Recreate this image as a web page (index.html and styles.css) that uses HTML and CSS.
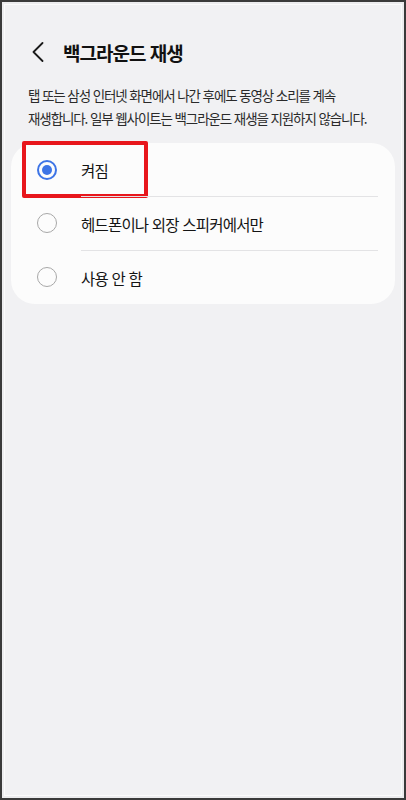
FILE: index.html
```html
<!DOCTYPE html>
<html lang="ko">
  <head>
    <meta charset="UTF-8" />
    <meta name="viewport" content="width=device-width, initial-scale=1.0" />
    <title>백그라운드 재생</title>
    <link rel="stylesheet" href="styles.css">
  </head>
  <body>
    <div class="phone">
      <div class="screen">
        <div class="header">
          <svg class="back" width="12" height="20" viewBox="0 0 12 20">
            <path d="M10.5 1 L1.5 10 L10.5 19" fill="none" stroke="#1a1a1a" stroke-width="1.8" stroke-linecap="round" stroke-linejoin="round" />
          </svg>
          <h1 class="title">백그라운드 재생</h1>
        </div>

        <p class="desc">
          탭 또는 삼성 인터넷 화면에서 나간 후에도 동영상 소리를 계속
          재생합니다. 일부 웹사이트는 백그라운드 재생을 지원하지 않습니다.
        </p>

        <div class="card">
          <div class="option selected">
            <span class="radio"></span>
            <span class="label">켜짐</span>
            <div class="highlight"></div>
          </div>
          <div class="option">
            <span class="radio"></span>
            <span class="label">헤드폰이나 외장 스피커에서만</span>
          </div>
          <div class="option">
            <span class="radio"></span>
            <span class="label">사용 안 함</span>
          </div>
        </div>
      </div>
    </div>
  </body>
</html>
```

FILE: styles.css
```css
html,
body {
  margin: 0;
  padding: 0;
}

body {
  font-family: "Noto Sans CJK KR", "Noto Sans", sans-serif;
  color: #1a1a1a;
  background-color: #2e2e2e;
}

.phone {
  height: 800px;
  box-sizing: border-box;
  border: 2px solid #3a3a3a;
  padding: 2px;
  background-color: #ececee;
}

.screen {
  height: 100%;
  box-sizing: border-box;
  border: 1px solid #fbfbfb;
  background-color: #f1f1f3;
  padding: 0 6px;
}

/* 상단 헤더 */
.header {
  display: flex;
  align-items: center;
  height: 40px;
  margin-top: 27px;
  padding-left: 21px;
}

.back {
  flex: none;
}

.title {
  margin: 0 0 0 19px;
  font-size: 19px;
  font-weight: 700;
  letter-spacing: -1px;
  color: #111111;
}

/* 설명 */
.desc {
  margin: 12px 0 0;
  padding: 0 17px;
  font-size: 13.5px;
  line-height: 23px;
  letter-spacing: -1.1px;
  word-break: keep-all;
  color: #2a2a2a;
}

/* 옵션 카드 */
.card {
  margin-top: 13px;
  background-color: #fcfcfc;
  border-radius: 24px;
}

.option {
  position: relative;
  display: flex;
  align-items: stretch;
  height: 54px;
}

.option:first-child {
  height: 53px;
}

.radio {
  flex: none;
  align-self: center;
  width: 20px;
  height: 20px;
  box-sizing: border-box;
  margin: 0 24px 0 26px;
  border: 1.5px solid #a8a8a8;
  border-radius: 50%;
}

.selected .radio {
  border: 2px solid #3d74e6;
  display: flex;
  align-items: center;
  justify-content: center;
}

.selected .radio::after {
  content: "";
  width: 10px;
  height: 10px;
  border-radius: 50%;
  background-color: #3d74e6;
}

.label {
  flex: 1;
  display: flex;
  align-items: center;
  margin-right: 17px;
  font-size: 15.5px;
  letter-spacing: -0.8px;
  color: #141414;
}

.option + .option .label {
  border-top: 1px solid #e3e3e5;
}

/* 빨간 강조 박스 */
.highlight {
  position: absolute;
  left: 11px;
  top: -2px;
  width: 126px;
  height: 57px;
  box-sizing: border-box;
  border: 4px solid #e8161c;
  border-radius: 2px;
}
```
